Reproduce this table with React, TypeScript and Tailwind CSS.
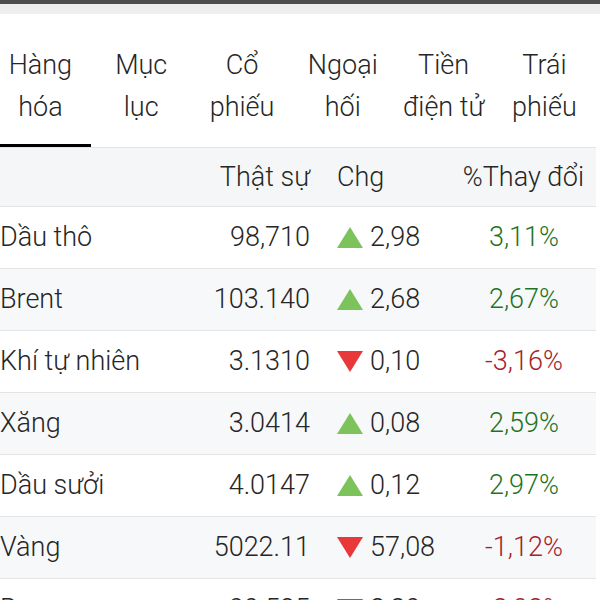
import React from "react";

type Row = { name: string; price: string; up: boolean; chg: string; pct: string };

const rows: Row[] = [
  { name: "Dầu thô", price: "98,710", up: true, chg: "2,98", pct: "3,11%" },
  { name: "Brent", price: "103.140", up: true, chg: "2,68", pct: "2,67%" },
  { name: "Khí tự nhiên", price: "3.1310", up: false, chg: "0,10", pct: "-3,16%" },
  { name: "Xăng", price: "3.0414", up: true, chg: "0,08", pct: "2,59%" },
  { name: "Dầu sưởi", price: "4.0147", up: true, chg: "0,12", pct: "2,97%" },
  { name: "Vàng", price: "5022.11", up: false, chg: "57,08", pct: "-1,12%" },
  { name: "Bạc", price: "80.525", up: false, chg: "3,30", pct: "-3,93%" },
];

const tabs = [
  ["Hàng", "hóa"],
  ["Mục", "lục"],
  ["Cổ", "phiếu"],
  ["Ngoại", "hối"],
  ["Tiền", "điện tử"],
  ["Trái", "phiếu"],
];

function Tri({ up }: { up: boolean }) {
  return (
    <svg width="26" height="21" viewBox="0 0 26 21" className="shrink-0">
      {up ? (
        <polygon points="0,21 13,0 26,21" fill="#7cc35b" />
      ) : (
        <polygon points="0,0 26,0 13,21" fill="#e8383a" />
      )}
    </svg>
  );
}

export default function App() {
  return (
    <div
      className="w-[600px] h-[600px] overflow-hidden bg-white text-[#262626] font-light"
      style={{ fontFamily: "Roboto, 'Noto Sans', sans-serif" }}
    >
      <div className="h-[4px] bg-[#4f4f4f]" />
      <div className="h-[10px] bg-[#efefef]" />
      <div className="w-[596px] overflow-hidden">
        <div className="flex h-[134px] ml-[-10px] border-b border-[#e4e4e4]">
          {tabs.map((t, i) => (
            <div
              key={i}
              className={
                "w-[100.8px] shrink-0 pt-[30px] text-center text-[27px] leading-[42px] " +
                (i === 0 ? "border-b-[3px] border-black" : "")
              }
            >
              <div>{t[0]}</div>
              <div className="whitespace-nowrap">{t[1]}</div>
            </div>
          ))}
        </div>
      </div>
      <div className="w-[596px] text-[27px]">
        <div className="grid grid-cols-[200px_110px_142px_144px] h-[59px] items-center bg-[#f5f6f8] border-b border-[#e4e4e4]">
          <div />
          <div className="text-right">Thật sự</div>
          <div className="pl-[27px]">Chg</div>
          <div className="text-right pr-[12px]">%Thay đổi</div>
        </div>
        {rows.map((r, i) => (
          <div
            key={r.name}
            className={
              "grid grid-cols-[200px_110px_142px_144px] h-[62px] items-center border-b border-[#e4e4e4] " +
              (i % 2 === 1 ? "bg-[#f7f8fa]" : "bg-white")
            }
          >
            <div className="whitespace-nowrap">{r.name}</div>
            <div className="text-right">{r.price}</div>
            <div className="pl-[27px] flex items-center gap-[7px]">
              <Tri up={r.up} />
              <span>{r.chg}</span>
            </div>
            <div className={"text-center " + (r.up ? "text-[#1f7325]" : "text-[#a5222a]")}>{r.pct}</div>
          </div>
        ))}
      </div>
    </div>
  );
}
